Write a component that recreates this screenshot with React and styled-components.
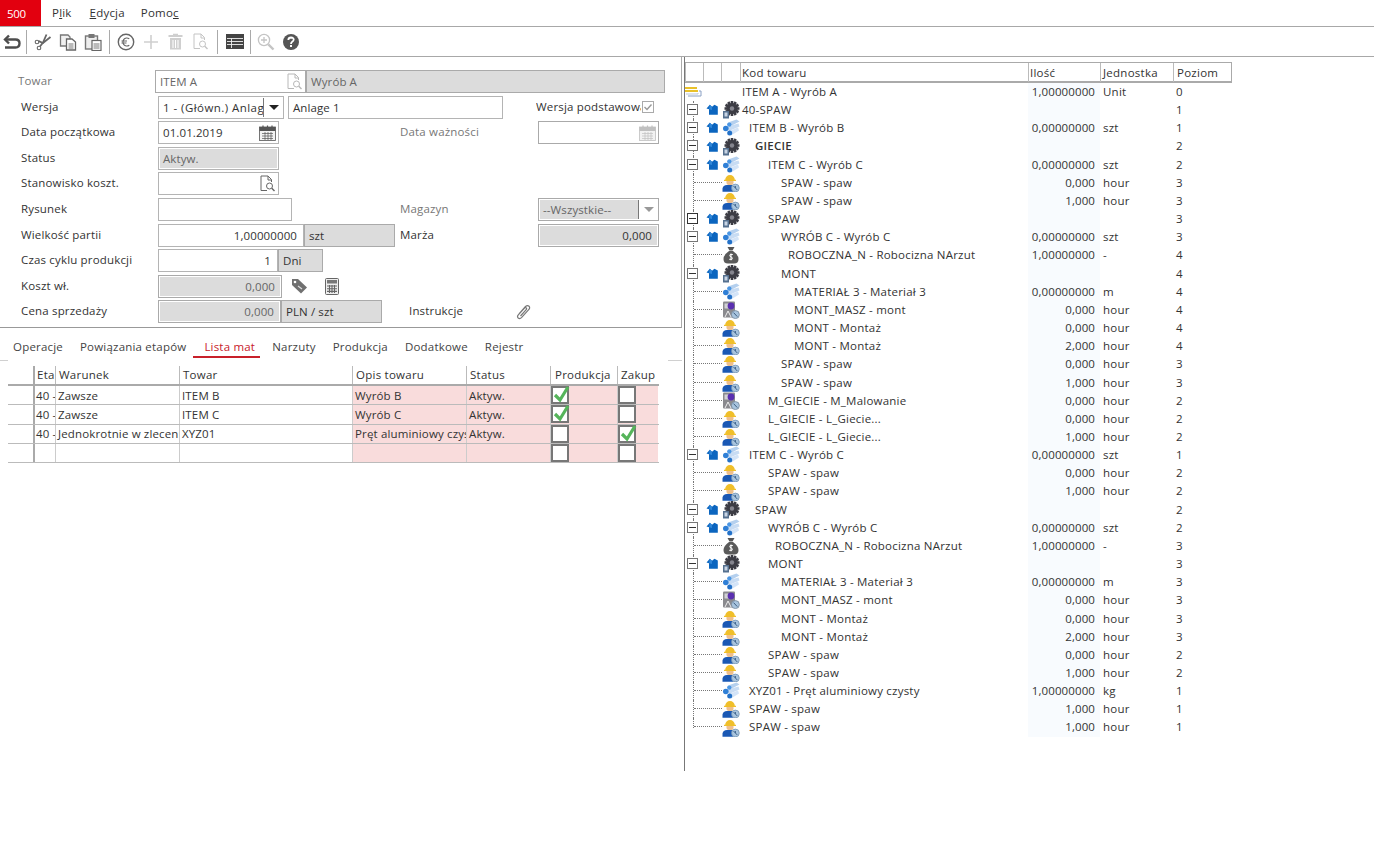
import React from "react";
import styled, { createGlobalStyle } from "styled-components";

const Global = createGlobalStyle`
  html, body { margin: 0; padding: 0; background: #fff; }
  body { font-family: "Open Sans", "Liberation Sans", sans-serif; font-size: 11.5px; color: #333; }
  * { box-sizing: border-box; }
`;

const Page = styled.div`width: 1374px; height: 861px; overflow: hidden; display: flex; flex-direction: column; background: #fff;`;
const MenuBar = styled.div`height: 27px; display: flex; border-bottom: 1px solid #a8a8a8; flex: none;`;
const Brand = styled.div`width: 41px; height: 26px; background: #e2000f; color: #fff; font-size: 11.5px; display: flex; align-items: center; padding-left: 7px; letter-spacing: -0.3px;`;
const MenuItem = styled.div`margin-left: ${p => p.$ml}px; line-height: 25px; font-size: 11.5px; letter-spacing: .2px; color: #333;`;
const Toolbar = styled.div`height: 30px; display: flex; align-items: center; border-bottom: 1px solid #a8a8a8; flex: none;`;
const ToolBtn = styled.div`width: ${p => p.$w || 25}px; height: 24px; display: flex; align-items: center; justify-content: center; flex: none;`;
const ToolSep = styled.div`width: ${p => p.$w || 6}px; height: 24px; display: flex; justify-content: center; flex: none; &::before { content: ""; width: 1px; background: #aaa; }`;
const Main = styled.div`display: flex; flex: none; height: 714px;`;
const LeftPanel = styled.div`width: 684px; flex: none;`;
const FormPanel = styled.div`width: 682px; height: 271px; border-right: 1px solid #aaa; border-bottom: 1px solid #999; padding-top: 13px; display: flex; flex-direction: column; gap: 2.6px;`;
const FormRow = styled.div`height: 23px; display: flex; align-items: stretch; flex: none;`;
const Label = styled.div`width: ${p => p.$w || 158}px; margin-left: ${p => p.$ml || 0}px; flex: none; padding-left: ${p => p.$pl ?? 21}px; line-height: 21px; white-space: nowrap; overflow: hidden; font-size: 11.5px; letter-spacing: .17px; color: ${p => p.$muted ? "#777" : "#333"};`;
const Field = styled.div`
  width: ${p => p.$w}px; margin-left: ${p => p.$ml || 0}px; flex: none; position: relative; display: flex; align-items: center;
  padding: 0 ${p => p.$right ? 6 : 4}px; white-space: nowrap; overflow: hidden; font-size: 11.5px; letter-spacing: ${p => p.$ls ?? 0.1}px;
  justify-content: ${p => p.$right ? "flex-end" : "flex-start"};
  border: 1px solid ${p => p.$dis ? "#aaa" : "#b4b4b4"};
  background: ${p => p.$gray ? "#dcdcdc" : "#fff"};
  color: ${p => p.$dim ? "#666" : "#333"};
  ${p => p.$inset ? "box-shadow: inset 0 0 0 1px #fff;" : ""}
`;
const FieldIcon = styled.div`position: absolute; right: 1px; top: 0; bottom: 0; width: 20px; display: flex; align-items: center; justify-content: center; background: inherit;`;
const SelectBtn = styled.div`position: absolute; right: 0; top: 1px; bottom: 1px; width: 20px; border-left: 1px solid #777; display: flex; align-items: center; justify-content: center; background: #fff; &::after { content: ""; border-left: 5px solid transparent; border-right: 5px solid transparent; border-top: 5px solid ${p => p.$dis ? "#999" : "#222"}; }`;
const Check = styled.div`width: 12px; height: 12px; border: 1px solid #aaa; margin: 5px 0 0 1px; display:flex; align-items:center; justify-content:center; flex: none;`;
const IconSlot = styled.div`width: ${p => p.$w}px; margin-left: ${p => p.$ml || 0}px; flex: none; display: flex; align-items: center; justify-content: center;`;

const Tabs = styled.div`height: 30px; display: flex; align-items: flex-end; flex: none;`;
const Tab = styled.div`margin-left: ${p => p.$ml}px; padding: 0 ${p => p.$active ? 5 : 0}px 0 ${p => p.$active ? 11 : 0}px; height: 20px; line-height: 18px; letter-spacing: .2px; font-size: 11.5px; color: ${p => p.$active ? "#c8202a" : "#444"}; border-bottom: 2px solid ${p => p.$active ? "#c8202a" : "transparent"};`;
const TabRule = styled.div`height: 1px; display: flex; justify-content: space-between; margin: 2px 2px 0 0; flex: none;`;
const Tick = styled.div`width: ${p => p.$w}px; height: 1px; background: #d0d0d0;`;
const Table = styled.div`margin: 5px 0 0 8px; width: 651px; display: flex; flex-direction: column;`;
const columns = "25px 22px 124px 173px 114px 84px 67px 41px";
const TableHead = styled.div`display: grid; grid-template-columns: ${columns}; height: 20px; border-bottom: 2px solid #aaa;`;
const HeadCell = styled.div`border-left: ${p => p.$thick ? "2px solid #aaa" : p.$none ? "none" : "1px solid #bbb"}; padding-left: ${p => p.$pl ?? 3}px; line-height: 18px; white-space: nowrap; overflow: hidden; letter-spacing: .25px; color: #333; font-size: 11.5px;`;
const TableRow = styled.div`display: grid; grid-template-columns: ${columns}; height: 19.3px; border-bottom: 1px solid #bbb;`;
const Cell = styled.div`border-left: ${p => p.$thick ? "2px solid #aaa" : p.$none ? "none" : "1px solid #ccc"}; padding-left: ${p => p.$pl ?? 2}px; line-height: 17px; white-space: nowrap; overflow: hidden; background: ${p => p.$pink ? "#f9dcdc" : "transparent"}; color: #333; font-size: 11.5px; letter-spacing: .15px; display: flex; align-items: center;`;
const Box = styled.div`width: 18px; height: 18px; border: 2px solid #777; background: #fff; position: relative; flex: none;`;

const Divider = styled.div`width: 1px; height: 714px; background: #777; flex: none;`;
const TreePanel = styled.div`width: 600px; padding-top: 5px; flex: none;`;
const treeCols = "18px 18px 19px 288px 72px 73px 59px";
const TreeHead = styled.div`display: grid; grid-template-columns: ${treeCols}; width: 547px; height: 21px; border-top: 1px solid #aaa; border-bottom: 2px solid #aaa;`;
const TreeHeadCell = styled.div`border-left: 1px solid #bbb; padding-left: ${p => p.$pl ?? 1}px; line-height: 19px; letter-spacing: .25px; font-size: 11.5px; color: #333; &:last-child { border-right: 1px solid #aaa; }`;
const TreeRow = styled.div`display: grid; grid-template-columns: ${treeCols}; width: 547px; height: 18.17px; position: relative; font-size: 11.5px; letter-spacing: .22px; line-height: 18px; color: #333;`;
const Exp = styled.div`position: absolute; left: 2px; top: 3px; width: 11px; height: 11px; border: 1px solid ${p => p.$dark ? "#333" : "#777"}; background: #fff; z-index: 2; &::after { content: ""; position: absolute; left: 1px; right: 1px; top: 4px; height: 1px; background: #333; }`;
const VLine = styled.div`position: absolute; left: 8px; top: ${p => p.$first ? 9 : 0}px; bottom: ${p => p.$last ? 9 : 0}px; border-left: 1px dotted #777;`;
const HLine = styled.div`position: absolute; left: 9px; top: 8px; width: ${p => p.$w}px; border-top: 1px dotted #777;`;
const TreeIconCell = styled.div`position: relative; display: flex; align-items: center; justify-content: center;`;
const TreeText = styled.div`padding-left: ${p => p.$indent}px; white-space: nowrap; overflow: hidden; font-weight: ${p => p.$bold ? 600 : 400};`;
const TreeQty = styled.div`text-align: right; padding-right: 5px; background: #f8fbfe; letter-spacing: .1px;`;
const TreeUnit = styled.div`padding-left: 3px;`;
const TreeLevel = styled.div`padding-left: 3px;`;

/* ---- drawn icons ---- */
const Gear = () => (
  <svg width="18" height="18" viewBox="0 0 18 18">
    <g transform="translate(10 7.5)">
      {[0,30,60,90,120,150].map(a => <rect key={a} x="-1.3" y="-7.5" width="2.6" height="15" fill="#3c3c44" transform={`rotate(${a})`} />)}
      <circle r="5.6" fill="#3c3c44" />
      <circle r="2.2" fill="#85858e" />
    </g>
    <rect x="1" y="10" width="6" height="7.5" fill="#55708f" />
    <rect x="2.5" y="11.5" width="3" height="4" fill="#c8d4e4" />
  </svg>
);
const Material = () => (
  <svg width="18" height="18" viewBox="0 0 18 18">
    <path d="M6 3.5 L14.5 0.5 L17.5 2.5 L8 7.5Z" fill="#b5d0ee" />
    <path d="M5 7.5 L16.5 4.5 L17.5 7.5 L7 12Z" fill="#c8dcf3" />
    <path d="M7 12 L16 8.5 L17 11.5 L9 16.5Z" fill="#d4e4f7" />
    <circle cx="3.8" cy="9.5" r="2.8" fill="#2f7fd6" />
    <circle cx="7.3" cy="5.6" r="2.2" fill="#4c97e4" />
    <circle cx="7.7" cy="14" r="2.5" fill="#2371c8" />
  </svg>
);
const Worker = () => (
  <svg width="18" height="18" viewBox="0 0 18 18">
    <ellipse cx="8" cy="8" rx="3.6" ry="3.2" fill="#eebf8c" />
    <path d="M3.2 5.8 A4.8 4.8 0 0 1 12.8 5.8 H14 V7 H2 V5.8Z" fill="#f0bf2a" />
    <path d="M0.5 17.8 V14.5 Q1 11 5 11 H10.5 L11.5 17.8Z" fill="#1a58b4" />
    <circle cx="13.4" cy="14" r="3.9" fill="#a8c4de" stroke="#6f8fae" strokeWidth=".7" />
    <path d="M11.5 12 L15.3 16 M13.4 12 V14" stroke="#3f648c" strokeWidth="1" />
  </svg>
);
const Machine = () => (
  <svg width="18" height="18" viewBox="0 0 18 18">
    <rect x="1" y="0.5" width="12" height="16" rx="1" fill="#8a8a8e" />
    <rect x="2.5" y="2.5" width="5" height="5" fill="#d0d0d4" />
    <circle cx="9" cy="5" r="3.4" fill="#5a2fb0" />
    <circle cx="13.4" cy="13.6" r="4" fill="#a8c4de" stroke="#6f7f90" strokeWidth=".7" />
    <path d="M11.5 11.6 L15.3 15.6" stroke="#3f5f80" strokeWidth="1" />
    <path d="M3 16 L6 10 L9 16" fill="none" stroke="#eee" strokeWidth="1" />
  </svg>
);
const Bag = () => (
  <svg width="18" height="18" viewBox="0 0 18 18">
    <path d="M5.5 1 H12.5 L10.5 4.5 H7.5Z" fill="#555" />
    <path d="M7 5 H11 Q16.5 9 16.5 13 Q16.5 17.5 12 17.5 H6 Q1.5 17.5 1.5 13 Q1.5 9 7 5Z" fill="#5a5a5a" />
    <path d="M10.8 8.5 H8.2 Q7 10.6 9 10.9 Q11 11.3 10 13.3 H7.2 M9 7.5 V14.3" stroke="#fff" strokeWidth="1" fill="none" />
  </svg>
);
const BlueArrow = () => (
  <svg width="12" height="12" viewBox="0 0 12 12">
    <path d="M0.5 4.5 L3.8 0.8 L6 2.8 L8.5 0.8 L11.8 2.5 V10.8 H3 V5.2Z" fill="#0b65bf" />
    <path d="M3 5.2 L3.8 0.8 L6 2.8 L6 6 Z" fill="#2f86d8" />
  </svg>
);
const Root = () => (
  <svg width="18" height="12" viewBox="0 0 18 12">
    <rect x="0" y="1" width="12" height="2" fill="#e9c12a" />
    <rect x="0" y="4" width="13" height="2" fill="#e9c12a" />
    <path d="M14 5 H16 V10 H3" stroke="#8aa0c4" strokeWidth="1" fill="none" />
    <path d="M13 7 V8 H1" stroke="#b8c4d8" strokeWidth="1" fill="none" />
  </svg>
);
const CalendarIcon = ({ c = "#555" }) => (
  <svg width="17" height="16" viewBox="0 0 17 16">
    <rect x="0.5" y="2" width="16" height="13.5" fill="#f2f2f2" stroke={c} strokeWidth=".8" />
    <rect x="0.5" y="2" width="16" height="4" fill={c} />
    <path d="M4 0.5 V3 M8.5 0.5 V3 M13 0.5 V3" stroke={c} strokeWidth="1.2" />
    <path d="M3 8.5 H14 M3 11 H14 M3 13.5 H14 M6 7 V15 M9 7 V15 M12 7 V15" stroke={c} strokeWidth=".7" />
  </svg>
);
const DocSearch = ({ c = "#999", s = 17 }) => (
  <svg width={s} height={s} viewBox="0 0 17 17" fill="none" stroke={c} strokeWidth="1">
    <path d="M8 15.5 H2 V1 H9 L12.5 4.5 V7" />
    <path d="M9 1 V5 H12.5" />
    <circle cx="10.5" cy="11" r="3" />
    <path d="M12.8 13.2 L15.5 16" strokeWidth="1.4" />
  </svg>
);

const UndoI = () => <svg width="18" height="16" viewBox="0 0 18 16" fill="none" stroke="#4d4d4d" strokeWidth="2.4"><path d="M6 1.5 L2 5.5 L6 9.5" /><path d="M2.5 5.5 H12.5 Q16.5 5.5 16.5 9.2 Q16.5 13.5 12.5 13.5 H2" /></svg>;
const ScissorsI = () => <svg width="18" height="18" viewBox="0 0 18 18" fill="none" stroke="#666" strokeWidth="1.1"><circle cx="3" cy="9" r="1.8" /><circle cx="5" cy="15" r="1.8" /><path d="M4.7 8.2 L9 10 L16.5 4" strokeWidth="1.8" /><path d="M6 13.5 L9 9.5 L12.5 1.5" strokeWidth="1.8" /></svg>;
const CopyI = () => <svg width="18" height="18" viewBox="0 0 18 18"><path d="M1.5 2 H9 L11 4 V13 H1.5Z" fill="#f0f0f0" stroke="#777" strokeWidth="1.3" /><path d="M7.5 6 H13 L16.5 9 V17 H7.5Z" fill="#fff" stroke="#666" strokeWidth="1.3" /><path d="M9.5 11 H14.5 M9.5 13 H14.5 M9.5 15 H14.5" stroke="#777" /></svg>;
const PasteI = () => <svg width="18" height="18" viewBox="0 0 18 18"><rect x="1.5" y="3" width="12" height="13" fill="#eee" stroke="#777" strokeWidth="1.4" /><rect x="4.5" y="1" width="6" height="4" fill="#777" /><rect x="8" y="7.5" width="9" height="10" fill="#fff" stroke="#666" strokeWidth="1.2" /><path d="M9.5 11 H15.5 M9.5 13 H15.5 M9.5 15 H15.5" stroke="#777" /></svg>;
const EuroI = () => <svg width="18" height="18" viewBox="0 0 18 18" fill="none" stroke="#666"><circle cx="9" cy="9" r="7.7" strokeWidth="1.4" /><path d="M12.3 5.8 Q10.8 4.8 9.3 5 Q6 5.6 6 9 Q6 12.4 9.3 13 Q10.8 13.2 12.3 12.2 M4.5 8 H10 M4.5 10 H9.5" strokeWidth="1.1" /></svg>;
const PlusI = () => <svg width="16" height="16" viewBox="0 0 16 16" stroke="#cfcfcf" strokeWidth="1.6"><path d="M8 1 V15 M1 8 H15" /></svg>;
const TrashI = () => <svg width="15" height="17" viewBox="0 0 15 17"><path d="M5 2 V0.8 H10 V2 H14.5 V4 H0.5 V2Z" fill="#cfcfcf" /><path d="M2 5 H13 V16.5 H2Z" fill="#cfcfcf" /><path d="M5 7 V15 M7.5 7 V15 M10 7 V15" stroke="#fff" /></svg>;
const TableI = () => <svg width="18" height="15" viewBox="0 0 18 15"><rect width="18" height="15" fill="#444" /><path d="M1 4.5 H17 M1 7.5 H17 M1 10.5 H17" stroke="#eee" strokeWidth=".9" /><path d="M5.5 4 V14" stroke="#eee" strokeWidth=".9" /></svg>;
const ZoomI = () => <svg width="18" height="18" viewBox="0 0 18 18" fill="none" stroke="#c4c4c4"><circle cx="7" cy="7" r="5.6" strokeWidth="1.3" /><path d="M4 7 H10 M7 4 V10" strokeWidth="1.3" /><path d="M11.3 11.3 L16.5 16.5" strokeWidth="2.4" /></svg>;
const HelpI = () => <svg width="16" height="16" viewBox="0 0 16 16"><circle cx="8" cy="8" r="8" fill="#555" /><path d="M5.3 6 Q5.5 3.5 8 3.5 Q10.8 3.6 10.7 5.8 Q10.6 7.1 9 7.9 Q8 8.5 8 10" stroke="#fff" strokeWidth="1.8" fill="none" /><rect x="7" y="11" width="2" height="2" fill="#fff" /></svg>;
const TagI = () => <svg width="17" height="16" viewBox="0 0 17 16"><path d="M1 1 H7 L16 9.5 L10 15.5 L1 7Z" fill="#707070" /><circle cx="4" cy="4" r="1.3" fill="#fff" /><path d="M7 8 L11 11" stroke="#ddd" strokeWidth="1.2" /></svg>;
const CalcI = () => <svg width="14" height="17" viewBox="0 0 14 17"><rect x=".5" y=".5" width="13" height="16" rx="1" fill="#eee" stroke="#666" /><rect x="2" y="2" width="10" height="3.5" fill="#777" /><path d="M2 8 H12 M2 10.7 H12 M2 13.4 H12 M4.5 7 V15 M7 7 V15 M9.5 7 V15" stroke="#666" strokeWidth="1.1" /></svg>;
const ClipI = () => <svg width="16" height="16" viewBox="0 0 16 16" fill="none" stroke="#777" strokeWidth="1.2"><path d="M4 10 L10.5 2.5 Q12.5 0.8 14 2.2 Q15.4 3.8 13.7 5.7 L6.5 13.7 Q4.8 15.4 3.2 14 Q1.8 12.6 3.3 10.8 L9.5 4 Q10.5 3.2 11.3 3.9 Q12 4.8 11 5.8 L5.5 12" /></svg>;
const GreenTick = () => (
  <svg width="20" height="20" viewBox="0 0 20 20" style={{ position: "absolute", left: -1, top: -4 }}>
    <path d="M3 11 L8 16 L16 3" fill="none" stroke="#55b45a" strokeWidth="3.2" />
  </svg>
);
const SmallTick = () => <svg width="10" height="10" viewBox="0 0 10 10"><path d="M1.5 5 L4 7.5 L8.5 2.5" fill="none" stroke="#999" strokeWidth="1.4" /></svg>;

const icons = { g: Gear, m: Material, w: Worker, x: Machine, b: Bag };

/* exp, icon, text x, text, qty, unit, level, bold */
const tree = [
  [0, "r", 742, "ITEM A - Wyrób A", "1,00000000", "Unit", "0"],
  [1, "g", 742, "40-SPAW", "", "", "1"],
  [1, "m", 749, "ITEM B - Wyrób B", "0,00000000", "szt", "1"],
  [1, "g", 755, "GIECIE", "", "", "2", 1],
  [1, "m", 768, "ITEM C - Wyrób C", "0,00000000", "szt", "2"],
  [0, "w", 781, "SPAW - spaw", "0,000", "hour", "3"],
  [0, "w", 781, "SPAW - spaw", "1,000", "hour", "3"],
  [2, "g", 768, "SPAW", "", "", "3"],
  [1, "m", 781, "WYRÓB C - Wyrób C", "0,00000000", "szt", "3"],
  [0, "b", 788, "ROBOCZNA_N - Robocizna NArzut", "1,00000000", "-", "4"],
  [1, "g", 781, "MONT", "", "", "4"],
  [0, "m", 794, "MATERIAŁ 3 - Materiał 3", "0,00000000", "m", "4"],
  [0, "x", 794, "MONT_MASZ - mont", "0,000", "hour", "4"],
  [0, "w", 794, "MONT - Montaż", "0,000", "hour", "4"],
  [0, "w", 794, "MONT - Montaż", "2,000", "hour", "4"],
  [0, "w", 781, "SPAW - spaw", "0,000", "hour", "3"],
  [0, "w", 781, "SPAW - spaw", "1,000", "hour", "3"],
  [0, "x", 768, "M_GIECIE - M_Malowanie", "0,000", "hour", "2"],
  [0, "w", 768, "L_GIECIE - L_Giecie...", "0,000", "hour", "2"],
  [0, "w", 768, "L_GIECIE - L_Giecie...", "1,000", "hour", "2"],
  [1, "m", 749, "ITEM C - Wyrób C", "0,00000000", "szt", "1"],
  [0, "w", 768, "SPAW - spaw", "0,000", "hour", "2"],
  [0, "w", 768, "SPAW - spaw", "1,000", "hour", "2"],
  [1, "g", 755, "SPAW", "", "", "2"],
  [1, "m", 768, "WYRÓB C - Wyrób C", "0,00000000", "szt", "2"],
  [0, "b", 775, "ROBOCZNA_N - Robocizna NArzut", "1,00000000", "-", "3"],
  [1, "g", 768, "MONT", "", "", "3"],
  [0, "m", 781, "MATERIAŁ 3 - Materiał 3", "0,00000000", "m", "3"],
  [0, "x", 781, "MONT_MASZ - mont", "0,000", "hour", "3"],
  [0, "w", 781, "MONT - Montaż", "0,000", "hour", "3"],
  [0, "w", 781, "MONT - Montaż", "2,000", "hour", "3"],
  [0, "w", 768, "SPAW - spaw", "0,000", "hour", "2"],
  [0, "w", 768, "SPAW - spaw", "1,000", "hour", "2"],
  [0, "m", 749, "XYZ01 - Pręt aluminiowy czysty", "1,00000000", "kg", "1"],
  [0, "w", 749, "SPAW - spaw", "1,000", "hour", "1"],
  [0, "w", 749, "SPAW - spaw", "1,000", "hour", "1"],
];

const tableRows = [
  ["40 -", "Zawsze", "ITEM B", "Wyrób B", "Aktyw.", true, false],
  ["40 -", "Zawsze", "ITEM C", "Wyrób C", "Aktyw.", true, false],
  ["40 -", "Jednokrotnie w zleceniu", "XYZ01", "Pręt aluminiowy czysty", "Aktyw.", false, true],
  ["", "", "", "", "", false, false],
];

export default function App() {
  return (
    <Page>
      <Global />
      <MenuBar>
        <Brand>500</Brand>
        <MenuItem $ml={11}>P<u>l</u>ik</MenuItem>
        <MenuItem $ml={18}><u>E</u>dycja</MenuItem>
        <MenuItem $ml={16}>Pomo<u>c</u></MenuItem>
      </MenuBar>
      <Toolbar>
        <ToolBtn $w={23}><UndoI /></ToolBtn>
        <ToolSep $w={7} />
        <ToolBtn><ScissorsI /></ToolBtn>
        <ToolBtn><CopyI /></ToolBtn>
        <ToolBtn><PasteI /></ToolBtn>
        <ToolSep $w={8} />
        <ToolBtn><EuroI /></ToolBtn>
        <ToolBtn><PlusI /></ToolBtn>
        <ToolBtn><TrashI /></ToolBtn>
        <ToolBtn><DocSearch c="#c4c4c4" /></ToolBtn>
        <ToolSep $w={9} />
        <ToolBtn><TableI /></ToolBtn>
        <ToolSep />
        <ToolBtn><ZoomI /></ToolBtn>
        <ToolBtn><HelpI /></ToolBtn>
      </Toolbar>
      <Main>
        <LeftPanel>
          <FormPanel>
            <FormRow>
              <Label $w={155} $pl={18} $muted>Towar</Label>
              <Field $w={151} $dim $dis>ITEM A<FieldIcon><DocSearch c="#b8b8b8" /></FieldIcon></Field>
              <Field $w={359} $gray $dim $dis>Wyrób A</Field>
            </FormRow>
            <FormRow>
              <Label>Wersja</Label>
              <Field $w={126} $ls={0.45}>1 - (Główn.) Anlage 1<SelectBtn /></Field>
              <Field $w={215} $ml={4}>Anlage 1</Field>
              <Label $w={105} $pl={0} $ml={33}>Wersja podstawowa</Label>
              <Check><SmallTick /></Check>
            </FormRow>
            <FormRow>
              <Label>Data początkowa</Label>
              <Field $w={121}>01.01.2019<FieldIcon><CalendarIcon /></FieldIcon></Field>
              <Label $w={138} $pl={0} $muted $ml={121}>Data ważności</Label>
              <Field $w={121} $dis><FieldIcon><CalendarIcon c="#c0c0c0" /></FieldIcon></Field>
            </FormRow>
            <FormRow>
              <Label>Status</Label>
              <Field $w={121} $gray $dim $inset>Aktyw.</Field>
            </FormRow>
            <FormRow>
              <Label>Stanowisko koszt.</Label>
              <Field $w={121}><FieldIcon><DocSearch c="#666" /></FieldIcon></Field>
            </FormRow>
            <FormRow>
              <Label>Rysunek</Label>
              <Field $w={134} />
              <Label $w={138} $pl={0} $muted $ml={108}>Magazyn</Label>
              <Field $w={121} $gray $dim $inset $dis>--Wszystkie--<SelectBtn $dis /></Field>
            </FormRow>
            <FormRow>
              <Label>Wielkość partii</Label>
              <Field $w={146} $right>1,00000000</Field>
              <Field $w={91} $gray $dis>szt</Field>
              <Label $w={143} $pl={5}>Marża</Label>
              <Field $w={121} $gray $right $dis $inset>0,000</Field>
            </FormRow>
            <FormRow>
              <Label>Czas cyklu produkcji</Label>
              <Field $w={120} $right>1</Field>
              <Field $w={45} $gray $dis>Dni</Field>
            </FormRow>
            <FormRow>
              <Label>Koszt wł.</Label>
              <Field $w={124} $gray $right $dim $inset $dis>0,000</Field>
              <IconSlot $w={18} $ml={8}><TagI /></IconSlot>
              <IconSlot $w={18} $ml={15}><CalcI /></IconSlot>
            </FormRow>
            <FormRow>
              <Label>Cena sprzedaży</Label>
              <Field $w={123} $gray $right $dim $inset $dis>0,000</Field>
              <Field $w={101} $gray $dis>PLN / szt</Field>
              <Label $w={100} $pl={0} $ml={27}>Instrukcje</Label>
              <IconSlot $w={16} $ml={6}><ClipI /></IconSlot>
            </FormRow>
          </FormPanel>
          <Tabs>
            <Tab $ml={13}>Operacje</Tab>
            <Tab $ml={17}>Powiązania etapów</Tab>
            <Tab $ml={7} $active>Lista mat</Tab>
            <Tab $ml={12}>Narzuty</Tab>
            <Tab $ml={17}>Produkcja</Tab>
            <Tab $ml={17}>Dodatkowe</Tab>
            <Tab $ml={17}>Rejestr</Tab>
          </Tabs>
          <TabRule><Tick $w={8} /><Tick $w={14} /></TabRule>
          <Table>
            <TableHead>
              <HeadCell $none />
              <HeadCell $thick $pl={2}>Etap</HeadCell>
              <HeadCell>Warunek</HeadCell>
              <HeadCell>Towar</HeadCell>
              <HeadCell>Opis towaru</HeadCell>
              <HeadCell>Status</HeadCell>
              <HeadCell $pl={4}>Produkcja</HeadCell>
              <HeadCell>Zakup</HeadCell>
            </TableHead>
            {tableRows.map((r, i) => (
              <TableRow key={i}>
                <Cell $none />
                <Cell $thick $pl={1}>{r[0]}</Cell>
                <Cell>{r[1]}</Cell>
                <Cell>{r[2]}</Cell>
                <Cell $pink>{r[3]}</Cell>
                <Cell $pink>{r[4]}</Cell>
                <Cell $pink $pl={0}><Box>{r[5] && <GreenTick />}</Box></Cell>
                <Cell $pink $pl={0}><Box>{r[6] && <GreenTick />}</Box></Cell>
              </TableRow>
            ))}
          </Table>
        </LeftPanel>
        <Divider />
        <TreePanel>
          <TreeHead>
            <TreeHeadCell />
            <TreeHeadCell />
            <TreeHeadCell />
            <TreeHeadCell>Kod towaru</TreeHeadCell>
            <TreeHeadCell>Ilość</TreeHeadCell>
            <TreeHeadCell $pl={2}>Jednostka</TreeHeadCell>
            <TreeHeadCell $pl={3}>Poziom</TreeHeadCell>
          </TreeHead>
          {tree.map((r, i) => {
            const [exp, ic, x, text, qty, unit, level, bold] = r;
            const I = icons[ic];
            const isRoot = ic === "r";
            return (
              <TreeRow key={i}>
                <TreeIconCell>
                  {!isRoot && <VLine $last={i === tree.length - 1} />}
                  {exp ? <Exp $dark={exp === 2} /> : null}
                  {!exp && !isRoot ? <HLine $w={28} /> : null}
                  {isRoot && <Root />}
                </TreeIconCell>
                <TreeIconCell>{exp ? <BlueArrow /> : null}</TreeIconCell>
                <TreeIconCell>{I ? <I /> : null}</TreeIconCell>
                <TreeText $indent={x - 740} $bold={bold}>{text}</TreeText>
                <TreeQty>{qty}</TreeQty>
                <TreeUnit>{unit}</TreeUnit>
                <TreeLevel>{level}</TreeLevel>
              </TreeRow>
            );
          })}
        </TreePanel>
      </Main>
    </Page>
  );
}
